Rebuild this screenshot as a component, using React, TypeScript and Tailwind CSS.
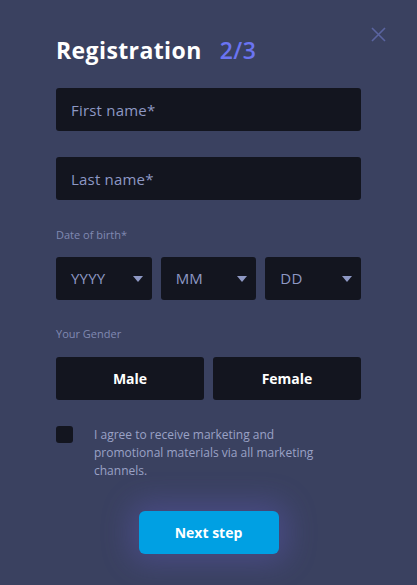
import { useState } from 'react';

const font = { fontFamily: '"Open Sans", "Noto Sans", sans-serif' };

function Caret() {
  return (
    <svg width="10" height="6" viewBox="0 0 10 6" className="fill-[#8e98c4]">
      <path d="M0 0h10L5 6z" />
    </svg>
  );
}

function DateSelect({ label }: { label: string }) {
  return (
    <button
      type="button"
      className="flex h-[43px] flex-1 items-center justify-between rounded-[3px] bg-[#13151f] pl-[15px] pr-[9px] text-[15px] tracking-[0.2px] text-[#8e98c4]"
    >
      <span>{label}</span>
      <Caret />
    </button>
  );
}

export default function App() {
  const [gender, setGender] = useState<string | null>(null);
  const [agree, setAgree] = useState(false);

  return (
    <div className="min-h-[585px] w-full bg-[#3a4160]" style={font}>
      <div className="relative px-[56px] pb-[32px] pt-[34px]">
        <button type="button" className="absolute right-[31px] top-[27px] text-[#5a64a0]">
          <svg width="15" height="15" viewBox="0 0 15 15" stroke="currentColor" strokeWidth="1.6">
            <path d="M1 1l13 13M14 1L1 14" />
          </svg>
        </button>

        <h1 className="flex items-baseline gap-[18px] text-[23px] font-bold leading-[32px] tracking-[0.4px] text-white">
          Registration
          <span className="font-semibold text-[#6b74f2]">2/3</span>
        </h1>

        <div className="mt-[22px] flex flex-col gap-[26px]">
          <input
            placeholder="First name*"
            className="h-[43px] w-full rounded-[3px] bg-[#13151f] px-[15px] text-[15px] tracking-[0.2px] text-white placeholder:text-[#8e98c4] focus:outline-none"
          />
          <input
            placeholder="Last name*"
            className="h-[43px] w-full rounded-[3px] bg-[#13151f] px-[15px] text-[15px] tracking-[0.2px] text-white placeholder:text-[#8e98c4] focus:outline-none"
          />
        </div>

        <p className="mt-[27px] text-[11px] leading-[16px] text-[#8089b2]">Date of birth*</p>
        <div className="mt-[14px] flex gap-[9px]">
          <DateSelect label="YYYY" />
          <DateSelect label="MM" />
          <DateSelect label="DD" />
        </div>

        <p className="mt-[26px] text-[11px] leading-[16px] text-[#8089b2]">Your Gender</p>
        <div className="mt-[15px] flex gap-[9px]">
          {['Male', 'Female'].map((g) => (
            <button
              key={g}
              type="button"
              onClick={() => setGender(g)}
              className={`h-[43px] flex-1 rounded-[3px] text-[14px] font-bold text-white ${
                gender === g ? 'bg-[#1c2030]' : 'bg-[#13151f]'
              }`}
            >
              {g}
            </button>
          ))}
        </div>

        <label className="mt-[26px] flex gap-[21px]">
          <input
            type="checkbox"
            checked={agree}
            onChange={() => setAgree(!agree)}
            className="h-[17px] w-[17px] shrink-0 appearance-none rounded-[3px] bg-[#13151f]"
          />
          <span className="w-[240px] text-[12px] leading-[18px] text-[#9aa2c6]">
            I agree to receive marketing and promotional materials via all marketing channels.
          </span>
        </label>

        <div className="mt-[31px] flex justify-center">
          <button
            type="button"
            className="h-[43px] w-[140px] rounded-[6px] bg-[#00a0e3] text-[14px] font-bold text-white shadow-[0_0_30px_8px_rgba(110,100,220,0.3)]"
          >
            Next step
          </button>
        </div>
      </div>
    </div>
  );
}
